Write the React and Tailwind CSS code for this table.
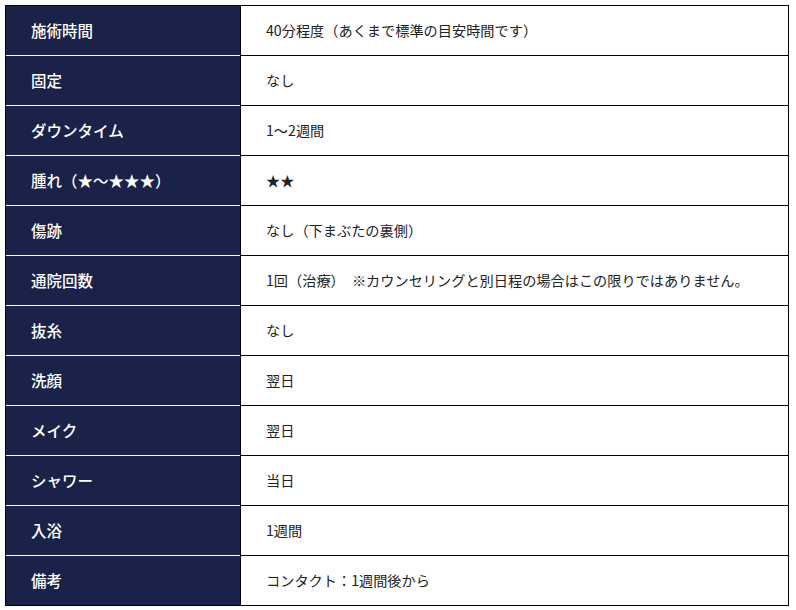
import React from "react";

const rows = [
   ["施術時間", "40分程度（あくまで標準の目安時間です）"],
   ["固定", "なし"],
   ["ダウンタイム", "1〜2週間"],
   ["腫れ（★〜★★★）", "★★"],
   ["傷跡", "なし（下まぶたの裏側）"],
   ["通院回数", "1回（治療）　※カウンセリングと別日程の場合はこの限りではありません。"],
   ["抜糸", "なし"],
   ["洗顔", "翌日"],
   ["メイク", "翌日"],
   ["シャワー", "当日"],
   ["入浴", "1週間"],
   ["備考", "コンタクト：1週間後から"],
];

export default function App() {
   return (
      <div className="w-[796px] h-[610px] bg-white pt-[5px] pl-[5px]" style={{ fontFamily: '"Noto Sans CJK JP", "Noto Sans", sans-serif' }}>
         <div className="w-[784px] border border-black">
            {rows.map(([label, value], i) => (
               <div key={label} className={`flex ${i === 0 ? "h-[49px]" : "h-[50px]"}`}>
                  <div className={`w-[234px] shrink-0 bg-[#1b2249] text-white font-medium text-[15.5px] flex items-center pl-[25px] ${i === 0 ? "" : "border-t border-white"}`}>
                     {label}
                  </div>
                  <div className={`flex-1 border-l border-black text-[#222] text-[14.2px] flex items-center pl-[25px] ${i === 0 ? "" : "border-t border-t-black"}`}>
                     {value}
                  </div>
               </div>
            ))}
         </div>
      </div>
   );
}
